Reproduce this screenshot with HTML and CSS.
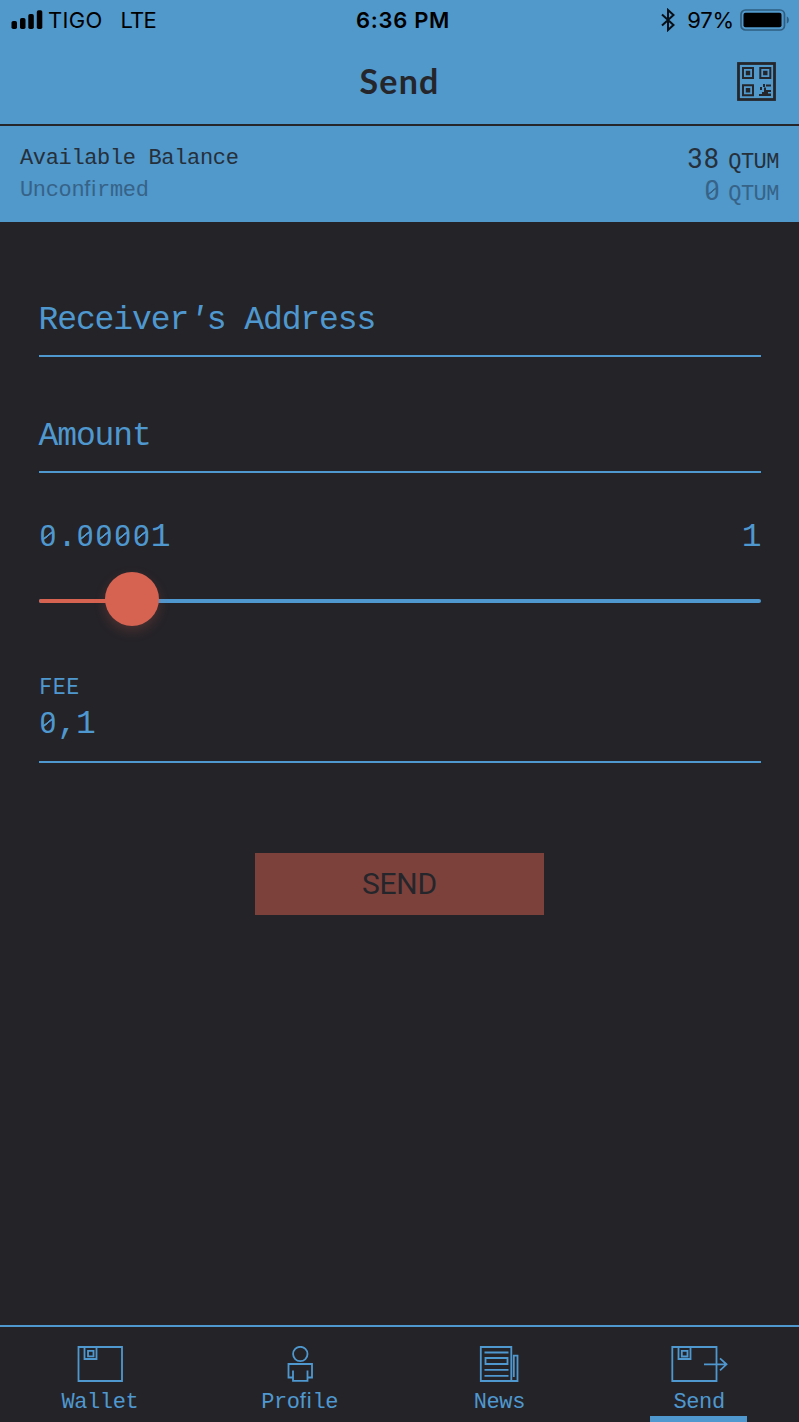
FILE: index.html
```html
<!DOCTYPE html>
<html lang="en">
<head>
<meta charset="utf-8">
<title>Send</title>
<link rel="stylesheet" href="styles.css">
</head>
<body>
<div class="app">
  <div class="status">
    <div class="status-left">
      <svg width="32" height="20" viewBox="0 0 32 20"><rect x="0.500" y="11" width="5.500" height="8" rx="1.800"/><rect x="9" y="8" width="5.500" height="11" rx="1.800"/><rect x="17.300" y="4" width="5.500" height="15" rx="1.800"/><rect x="25.800" y="0.300" width="5.500" height="18.700" rx="1.800"/></svg>
      <span class="carrier">TIGO</span><span class="network">LTE</span>
    </div>
    <div class="time">6:36 PM</div>
    <div class="status-right">
      <svg class="bluetooth" width="14" height="24" viewBox="0 0 14 24"><path d="M1 6.500 12.500 17 7 22V2l5.500 5L1 17.500" fill="none" stroke="#071018" stroke-width="2"/></svg>
      <span class="percent">97%</span>
      <svg width="50" height="22" viewBox="0 0 50 22"><rect x="1" y="1" width="43.500" height="20" rx="4.500" fill="none" stroke="#2f5e80" stroke-width="1.700"/><rect x="3.500" y="3.800" width="38" height="14.400" rx="2" fill="#000"/><path d="M46.800 7.500c2.800 1 2.800 6 0 7z" fill="#2f5e80"/></svg>
    </div>
  </div>
  <header class="header">
    <h1 class="title">Send</h1>
    <svg class="qr" width="40" height="40" viewBox="0 0 40 40" fill="none" stroke="#25262b"><rect x="1.500" y="1.500" width="36" height="36" stroke-width="2.800"/><path d="M6 6h10v10H6zM23.300 6h10v10h-10zM6 23.300h10v10H6z" stroke-width="2"/><path d="M8.800 8.800h4.400v4.400H8.800zM26.100 8.800h4.400v4.400h-4.400zM8.800 26.100h4.400v4.400H8.800z" fill="#25262b" stroke="none"/><path d="M26 22h2v3h-2zM29 22.500h5v2h-5zM23 25h2v3h-2zM27 25.500h2v2.500h5v2h-3v1.500h3v2.500H22v-2h3v-2h2z" fill="#25262b" stroke="none"/></svg>
  </header>
  <section class="balance">
    <div class="balance-row"><span class="caption">Available Balance</span><span class="value"><span class="number">38</span><span class="unit">QTUM</span></span></div>
    <div class="balance-row muted"><span class="caption">Uncon<span class="lig">fi</span>rmed</span><span class="value"><span class="number"><span class="zero">0</span></span><span class="unit">QTUM</span></span></div>
  </section>
  <main class="form">
    <div class="field">Receiver<span class="quote">′</span>s Address</div>
    <div class="field amount">Amount</div>
    <div class="range-labels"><span><span class="zero">0</span>.<span class="zero">0</span><span class="zero">0</span><span class="zero">0</span><span class="zero">0</span>1</span><span>1</span></div>
    <div class="slider"><div class="slider-fill"></div><div class="thumb"></div></div>
    <div class="fee-label">FEE</div>
    <div class="field fee"><span class="zero">0</span>,1</div>
    <button class="send-button">SEND</button>
  </main>
  <nav class="tabs">
    <div class="tab">
      <svg width="46" height="36" viewBox="0 0 46 36"><path d="M1.500 1h43.500v34H1.500zM7.500 1v12h12V1M11 4.800h5.500v5.500H11z"/></svg>
      <span>Wallet</span>
    </div>
    <div class="tab">
      <svg width="28" height="36" viewBox="0 0 28 36"><circle cx="14.300" cy="8" r="7.200"/><path d="M7 24.500v7H2.500V18h23.500v13.500h-4.500v-7M7 30v4.800h14.500V30"/></svg>
      <span>Pro<span class="lig">fi</span>le</span>
    </div>
    <div class="tab">
      <svg width="40" height="36" viewBox="0 0 40 36"><path d="M1.800 1h30.500v34H1.800zM32.300 35h6.200V9.700h-3.700v21.300M5.500 6.500h24M6.500 12h22v6h-22zM5.500 23.800h24M5.500 29.800h24"/></svg>
      <span>News</span>
    </div>
    <div class="tab active">
      <svg width="57" height="36" viewBox="0 0 57 36"><path d="M1.300 1h44.200v34H1.300zM7.500 1v12h12V1M10.800 4.800h5.700v5.700h-5.700zM33 18.300h22.500M49 12.300l6.500 6-6.500 6"/></svg>
      <span>Send</span>
    </div>
  </nav>
</div>
</body>
</html>
```
FILE: styles.css
```css
* { box-sizing: border-box; }
body { margin: 0; background: #242328; }
.app {
  width: 799px; height: 1422px; display: flex; flex-direction: column; overflow: hidden;
  background: #242328; color: #4f98cf; font-family: "Liberation Mono", monospace;
}
.status {
  height: 40px; padding: 0 9px 0 11px; background: #5198cb; color: #000;
  display: grid; grid-template-columns: 1fr auto 1fr; align-items: center;
  font: 400 22px/40px Inter, "Liberation Sans", sans-serif;
}
.status-left, .status-right { display: flex; align-items: center; }
.status-right { justify-content: flex-end; }
.carrier { margin-left: 5px; letter-spacing: 0.3px; }
.network { margin-left: 18px; letter-spacing: -0.8px; }
.time { padding-left: 5px; font-weight: 600; letter-spacing: 0.7px; }
.bluetooth { margin-right: 12px; }
.percent { margin-right: 6px; letter-spacing: -0.2px; }
.header {
  height: 86px; padding: 0 22px 0 62px; background: #5198cb; border-bottom: 2px solid #25262b;
  display: grid; grid-template-columns: 1fr 40px; align-items: center;
}
.title { margin: -2px 0 0; text-align: center; color: #25262b; font: 700 34px/84px Lato, sans-serif; letter-spacing: 1.2px; }
.balance { height: 96px; padding: 16px 20px; background: #5198cb; color: #25303b; }
.balance-row { height: 32px; display: flex; justify-content: space-between; font-size: 22px; line-height: 32px; letter-spacing: -0.35px; }
.caption { padding-top: 1px; }
.value { display: flex; }
.number { margin: 1px 8px 0 0; font: 400 27px/32px Roboto, sans-serif; letter-spacing: 1.2px; }
.unit { margin-top: 5px; letter-spacing: -0.5px; }
.muted { color: #366387; }
.lig { font-family: "Liberation Sans", sans-serif; letter-spacing: 0.9px; line-height: 1; }
.form { flex: 1; padding: 78px 38.500px 0; display: flex; flex-direction: column; font-size: 33px; line-height: 41px; letter-spacing: -1.100px; }
.field { height: 57px; border-bottom: 2px solid #4f98cf; }
.quote { display: inline-block; width: 18.700px; text-align: center; letter-spacing: 0; font-style: italic; line-height: 1; }
.amount { margin-top: 59px; }
.range-labels { margin-top: 44px; display: flex; justify-content: space-between; height: 40px; }
.zero {
  display: inline-block; vertical-align: top; width: 18.700px; height: 37px; text-align: center; letter-spacing: 0;
  font: 400 30px/37px Roboto, sans-serif;
  background: linear-gradient(141deg, transparent 43%, currentColor 46%, currentColor 54%, transparent 57%) center 13px / 10px 11px no-repeat;
}
.number .zero { width: 16px; height: 32px; font-size: 27px; line-height: 32px; background-position: center 11px; background-size: 9px 10px; }
.slider { position: relative; margin-top: 42px; height: 4px; border-radius: 2px; background: #4f98cf; }
.slider-fill { width: 93px; height: 4px; border-radius: 2px; background: #d66251; }
.thumb {
  position: absolute; left: 66px; top: -27px; width: 54px; height: 54px; border-radius: 50%;
  background: #d66251; box-shadow: 0 5px 12px rgba(214, 98, 81, 0.22);
}
.fee-label { margin-top: 67px; padding-left: 1px; height: 34px; font: 400 22px/34px Roboto, sans-serif; letter-spacing: 1px; }
.fee { margin-top: 0; height: 59px; }
.send-button {
  margin: 90px auto 0; width: 289.500px; height: 62px; border: 0; padding: 0; background: #7d413b;
  color: #25262b; font: 400 30px/62px Roboto, sans-serif; letter-spacing: -0.3px;
}
.tabs { height: 97px; border-top: 2px solid #4f98cf; display: grid; grid-template-columns: repeat(4, 1fr); }
.tab {
  position: relative; padding-top: 19px; display: flex; flex-direction: column; align-items: center;
  font-size: 22px; line-height: 30px; letter-spacing: -0.4px;
}
.tab svg { fill: none; stroke: #4f98cf; stroke-width: 1.8; }
.tab > span { margin-top: 6px; }
.active::after { content: ""; position: absolute; left: 51px; bottom: 0; width: 97px; height: 6px; background: #4f98cf; }
```
